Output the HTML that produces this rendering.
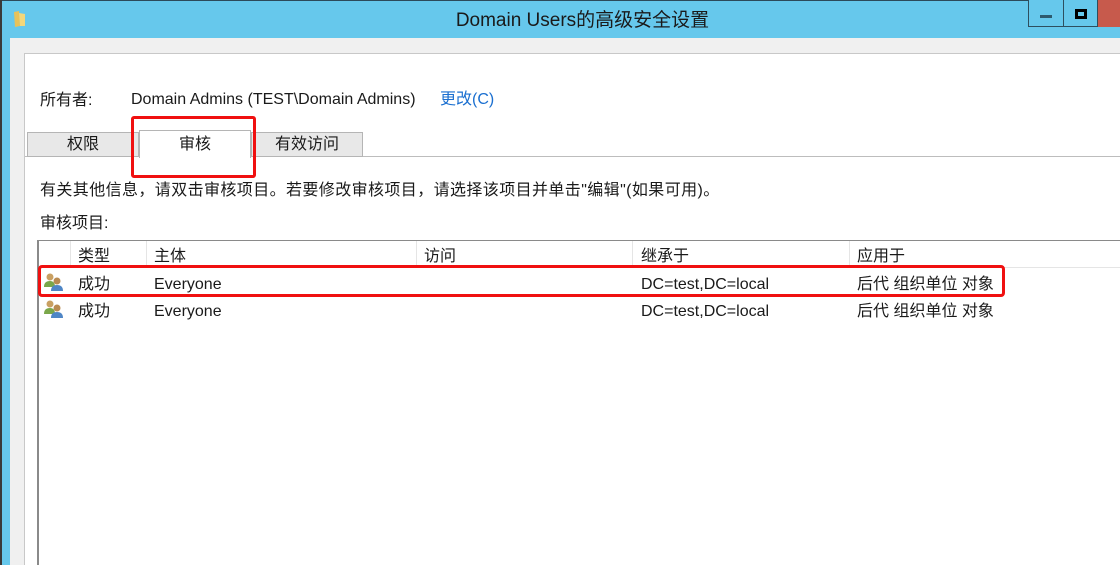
<!DOCTYPE html>
<html><head><meta charset="utf-8"><style>
*{margin:0;padding:0;box-sizing:border-box}
body{width:1120px;height:565px;overflow:hidden;position:relative;background:#fff;font-family:"Liberation Sans","Noto Sans CJK SC",sans-serif;font-size:16px;color:#1a1a1a}
.a{position:absolute}
.t{white-space:nowrap;line-height:20px}
</style></head><body>
<div class="a" style="left:0;top:0;width:1120px;height:38px;background:#66c8ec;border-top:1px solid #2c4a5a"></div>
<div class="a" style="left:0;top:0;width:2px;height:565px;background:#3a3a3a"></div>
<div class="a" style="left:2px;top:38px;width:8px;height:527px;background:#66c8ec"></div>
<svg class="a" style="left:13px;top:10px" width="14" height="18"><path d="M1 2 L6 1 L7 16 L2 17 Z" fill="#e8c25a"/><path d="M6 3 L12 4 L12 16 L7 16 Z" fill="#f3d77a"/></svg>
<div class="a t" style="left:0;width:1165px;top:10px;text-align:center;font-size:19px;line-height:22px;color:#1a1a1a">Domain Users的高级安全设置</div>
<div class="a" style="left:1028px;top:0;width:36px;height:27px;border:1px solid #2d4f5f;border-top:none;background:#66c8ec"></div>
<div class="a" style="left:1040px;top:15px;width:12px;height:3px;background:#2d5a6e"></div>
<div class="a" style="left:1063px;top:0;width:35px;height:27px;border:1px solid #2d4f5f;border-top:none;background:#66c8ec"></div>
<div class="a" style="left:1075px;top:9px;width:12px;height:10px;border:3px solid #000"></div>
<div class="a" style="left:1098px;top:0;width:22px;height:27px;background:#c75a4c"></div>
<div class="a" style="left:10px;top:38px;width:1110px;height:527px;background:#f0f0f0"></div>
<div class="a" style="left:24px;top:53px;width:1096px;height:512px;background:#fff;border-left:1px solid #c8c8c8;border-top:1px solid #c8c8c8"></div>
<div class="a t" style="left:40px;top:91px">所有者:</div>
<div class="a t" style="left:131px;top:90px">Domain Admins (TEST\Domain Admins)</div>
<div class="a t" style="left:440px;top:90px;color:#1a6fd0">更改(C)</div>
<div class="a" style="left:25px;top:156px;width:1095px;height:1px;background:#bdbdbd"></div>
<div class="a t" style="left:27px;top:132px;width:112px;height:25px;background:#e8e8e8;border:1px solid #b5b5b5;text-align:center;line-height:24px;font-size:16px">权限</div>
<div class="a t" style="left:139px;top:130px;width:112px;height:28px;background:#fff;border:1px solid #b5b5b5;border-bottom:none;text-align:center;line-height:28px;font-size:16px">审核</div>
<div class="a t" style="left:251px;top:132px;width:112px;height:25px;background:#e8e8e8;border:1px solid #b5b5b5;text-align:center;line-height:24px;font-size:16px">有效访问</div>
<div class="a" style="left:131px;top:116px;width:125px;height:62px;border:3px solid #f01010;border-radius:3px"></div>
<div class="a t" style="left:40px;top:181px;letter-spacing:0.4px">有关其他信息，请双击审核项目。若要修改审核项目，请选择该项目并单击"编辑"(如果可用)。</div>
<div class="a t" style="left:40px;top:214px">审核项目:</div>
<div class="a" style="left:37px;top:240px;width:1083px;height:325px;border-left:2px solid #8a8a8a;border-top:1px solid #8a8a8a"></div>
<div class="a" style="left:39px;top:267px;width:1081px;height:1px;background:#e5e5e5"></div>
<div class="a" style="left:70px;top:241px;width:1px;height:26px;background:#e5e5e5"></div>
<div class="a" style="left:146px;top:241px;width:1px;height:26px;background:#e5e5e5"></div>
<div class="a" style="left:416px;top:241px;width:1px;height:26px;background:#e5e5e5"></div>
<div class="a" style="left:632px;top:241px;width:1px;height:26px;background:#e5e5e5"></div>
<div class="a" style="left:849px;top:241px;width:1px;height:26px;background:#e5e5e5"></div>
<div class="a t" style="left:78px;top:247px">类型</div>
<div class="a t" style="left:154px;top:247px">主体</div>
<div class="a t" style="left:424px;top:247px">访问</div>
<div class="a t" style="left:641px;top:247px">继承于</div>
<div class="a t" style="left:857px;top:247px">应用于</div>
<svg class="a" style="left:43px;top:272px" width="22" height="20"><circle cx="7" cy="5" r="3.5" fill="#c9a062"/><path d="M1 15 Q1 9 7 9 Q12 9 12 15 Z" fill="#7aa74a"/><circle cx="14" cy="9" r="3.5" fill="#b98a50"/><path d="M8 19 Q8 13 14 13 Q20 13 20 19 Z" fill="#4f86c6"/></svg>
<svg class="a" style="left:43px;top:299px" width="22" height="20"><circle cx="7" cy="5" r="3.5" fill="#c9a062"/><path d="M1 15 Q1 9 7 9 Q12 9 12 15 Z" fill="#7aa74a"/><circle cx="14" cy="9" r="3.5" fill="#b98a50"/><path d="M8 19 Q8 13 14 13 Q20 13 20 19 Z" fill="#4f86c6"/></svg>
<div class="a t" style="left:78px;top:275px">成功</div>
<div class="a t" style="left:154px;top:275px">Everyone</div>
<div class="a t" style="left:641px;top:275px">DC=test,DC=local</div>
<div class="a t" style="left:857px;top:275px">后代 组织单位 对象</div>
<div class="a t" style="left:78px;top:302px">成功</div>
<div class="a t" style="left:154px;top:302px">Everyone</div>
<div class="a t" style="left:641px;top:302px">DC=test,DC=local</div>
<div class="a t" style="left:857px;top:302px">后代 组织单位 对象</div>
<div class="a" style="left:38px;top:265px;width:967px;height:32px;border:3px solid #f01010;border-radius:4px"></div>
</body></html>
